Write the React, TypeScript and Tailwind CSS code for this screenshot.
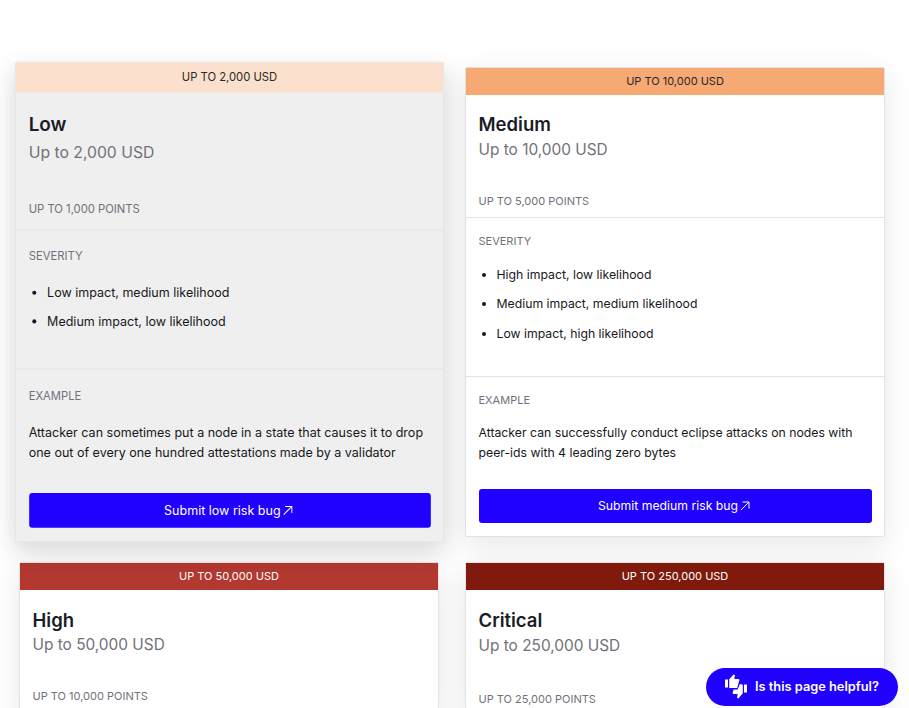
import React from 'react'

type Tier = {
  band: string
  bandClass: string
  title: string
  reward: string
  points: string
  card: string
  rule: string
  top: string
  sub: string
  pointsClass: string
  severity?: string[]
  severityClass?: string
  listClass?: string
  example?: string[]
  exampleClass?: string
  paraClass?: string
  action?: string
}

const Tiers: Tier[] = [
  {
    band: 'UP TO 2,000 USD',
    bandClass: 'h-[28.5px] bg-[#fce0ce] text-[#27272a]',
    title: 'Low',
    reward: 'Up to 2,000 USD',
    points: 'UP TO 1,000 POINTS',
    card: 'z-10 translate-x-[0.5px] scale-[1.022] border-[#e6e6e6] bg-[#efefef] shadow-[0_8px_24px_rgba(0,0,0,0.16)]',
    rule: 'border-[#e5e5e5]',
    top: 'h-[134.5px] pt-[17.5px]',
    sub: 'mt-[2px]',
    pointsClass: 'pb-[12.5px]',
    severity: ['Low impact, medium likelihood', 'Medium impact, low likelihood'],
    severityClass: 'h-[136px] pt-[17px]',
    listClass: 'mt-[18px] gap-[8px]',
    example: [
      'Attacker can sometimes put a node in a state that causes it to drop',
      'one out of every one hundred attestations made by a validator',
    ],
    exampleClass: 'pt-[18px]',
    paraClass: 'mt-[18px]',
    action: 'Submit low risk bug',
  },
  {
    band: 'UP TO 10,000 USD',
    bandClass: 'h-[27px] bg-[#f6a973] text-[#27272a]',
    title: 'Medium',
    reward: 'Up to 10,000 USD',
    points: 'UP TO 5,000 POINTS',
    card: 'border-[#e2e2e2] bg-white shadow-[0_8px_30px_rgba(0,0,0,0.1)]',
    rule: 'border-[#e2e2e2]',
    top: 'h-[122px] pt-[15px]',
    sub: 'mt-0',
    pointsClass: 'pb-2',
    severity: ['High impact, low likelihood', 'Medium impact, medium likelihood', 'Low impact, high likelihood'],
    severityClass: 'h-[159px] pt-[15px]',
    listClass: 'mt-[16px] gap-[9.4px]',
    example: [
      'Attacker can successfully conduct eclipse attacks on nodes with',
      'peer-ids with 4 leading zero bytes',
    ],
    exampleClass: 'pt-[15px]',
    paraClass: 'mt-[15px]',
    action: 'Submit medium risk bug',
  },
  {
    band: 'UP TO 50,000 USD',
    bandClass: 'h-[27px] bg-[#b23830] text-white',
    title: 'High',
    reward: 'Up to 50,000 USD',
    points: 'UP TO 10,000 POINTS',
    card: 'border-[#e2e2e2] bg-white shadow-[0_8px_30px_rgba(0,0,0,0.1)]',
    rule: 'border-[#e2e2e2]',
    top: 'h-[122px] pt-[16px]',
    sub: '-mt-[1px]',
    pointsClass: 'pb-2',
  },
  {
    band: 'UP TO 250,000 USD',
    bandClass: 'h-[27px] bg-[#7f1a0c] text-white',
    title: 'Critical',
    reward: 'Up to 250,000 USD',
    points: 'UP TO 25,000 POINTS',
    card: 'border-[#e2e2e2] bg-white shadow-[0_8px_30px_rgba(0,0,0,0.1)]',
    rule: 'border-[#e2e2e2]',
    top: 'h-[125px] pt-[16px]',
    sub: 'mt-0',
    pointsClass: 'pb-2',
  },
]

const Label = ({ children }: { children: React.ReactNode }) => (
  <div className="text-[11px] leading-4 text-[#71717a]">{children}</div>
)

const TierCard = ({ tier }: { tier: Tier }) => (
  <div className={`relative flex flex-col rounded-[2px] border ${tier.card}`}>
    <div className={`flex items-center justify-center text-[11px] ${tier.bandClass}`}>{tier.band}</div>

    <div className={`flex flex-col px-[12.5px] ${tier.top}`}>
      <h3 className="text-[18.5px] leading-7 font-semibold text-[#1a1c26]">{tier.title}</h3>
      <p className={`text-[15.4px] leading-6 text-[#71717a] ${tier.sub}`}>{tier.reward}</p>
      <div className={`mt-auto ${tier.pointsClass}`}>
        <Label>{tier.points}</Label>
      </div>
    </div>

    {tier.severity && (
      <div className={`border-t px-[12.5px] ${tier.rule} ${tier.severityClass}`}>
        <Label>SEVERITY</Label>
        <ul className={`flex flex-col list-disc pl-[18px] text-[12.25px] leading-5 text-[#18181b] ${tier.listClass}`}>
          {tier.severity.map((s) => (
            <li key={s}>{s}</li>
          ))}
        </ul>
      </div>
    )}

    {tier.example && (
      <div className={`flex flex-1 flex-col border-t px-[12.5px] pb-[13px] ${tier.rule} ${tier.exampleClass}`}>
        <Label>EXAMPLE</Label>
        <div className={`text-[12.25px] leading-5 text-[#18181b] ${tier.paraClass}`}>
          {tier.example.map((line) => (
            <div key={line} className="whitespace-nowrap">{line}</div>
          ))}
        </div>
        <button className="mt-auto flex h-[34px] items-center justify-center gap-[2px] rounded-[3px] bg-[#2000ff] pr-[2px] text-[12.25px] text-white">
          {tier.action}
          <svg width="10" height="10" viewBox="0 0 10 10" fill="none" stroke="currentColor" strokeWidth="1">
            <path d="M1 9 9 1" />
            <path d="M2.5 1H9v6.5" />
          </svg>
        </button>
      </div>
    )}
  </div>
)

export default function App() {
  return (
    <div className="relative h-[708px] overflow-hidden bg-white font-['Inter',sans-serif]">
      <div className="grid grid-cols-[420px_420px] grid-rows-[470px_auto] gap-x-[26px] gap-y-[25px] pl-[19px] pt-[67px]">
        {Tiers.map((tier) => (
          <TierCard key={tier.title} tier={tier} />
        ))}
      </div>

      <button className="absolute bottom-[2px] right-[11px] z-20 flex h-[38px] w-[192px] items-center gap-[8px] rounded-full bg-[#2000ff] pl-[19px] text-[12.8px] font-semibold text-white">
        <svg width="22" height="26" viewBox="0 0 22 26" fill="currentColor">
          <path d="M0 5.5h3v8H0z" />
          <path d="M4.2 5.2 8.6 0.5l1.4 0.8-0.7 3.6h4.6l0.5 1.2-2.2 8H4.2z" />
          <path d="M19 10.5h3v8h-3z" />
          <path d="M17.8 10.8v8.4l-4.4 5.3-1.4-0.8 0.7-3.6H8.1l-0.5-1.2 1-3.4h4l2.3-5.5z" />
        </svg>
        Is this page helpful?
      </button>
    </div>
  )
}
